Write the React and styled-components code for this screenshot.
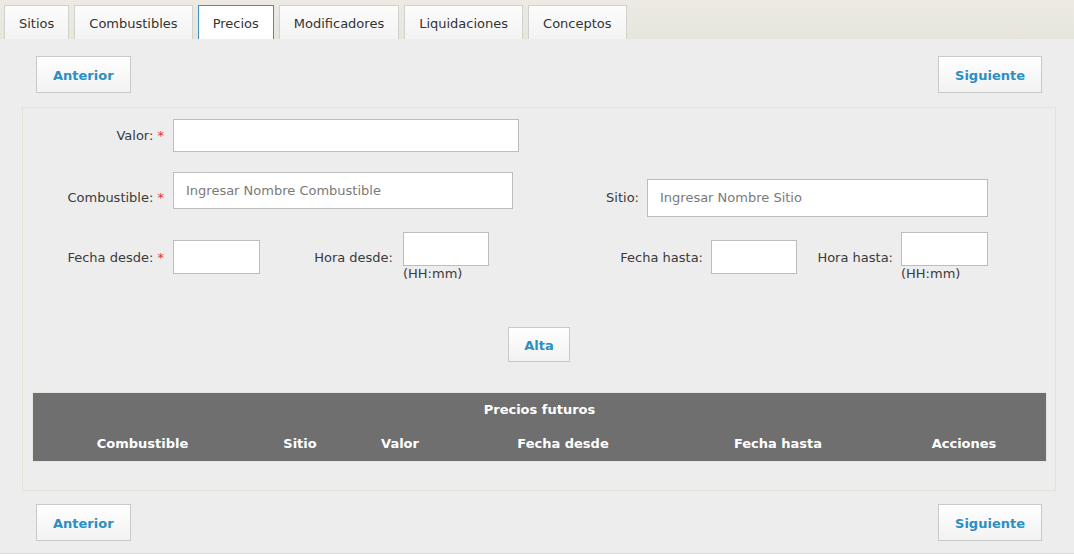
import React from "react";
import styled, { createGlobalStyle, css } from "styled-components";

const GlobalStyle = createGlobalStyle`
  html, body { margin: 0; padding: 0; background: #ffffff; }
  body { font-family: "DejaVu Sans", Verdana, sans-serif; }
  * { box-sizing: border-box; }
`;

const Page = styled.div`
  width: 1074px;
  height: 554px;
  background: #ededed;
  border-bottom: 1px solid #dcdcdc;
  font-family: "DejaVu Sans", Verdana, sans-serif;
`;

const TabBar = styled.div`
  height: 39px;
  display: flex;
  align-items: flex-end;
  gap: 5px;
  padding: 0 4px;
  background: linear-gradient(#eceae3, #e7e6dd);
`;

const Tab = styled.div`
  height: 34px;
  line-height: 34px;
  padding: 1px 14px 0;
  font-size: 13px;
  color: #333;
  border: 1px solid #d2d2cc;
  border-bottom: none;
  background: linear-gradient(#fcfcfc, #f3f3f3);
  ${(p) =>
    p.$active &&
    css`
      background: #ffffff;
      border-color: #3d8fbd;
    `}
`;

const NavRow = styled.div`
  display: flex;
  justify-content: space-between;
  padding: 0 32px 0 36px;
  margin-top: ${(p) => p.$top}px;
`;

const Button = styled.button`
  height: ${(p) => p.$h || 37}px;
  padding: 1px ${(p) => p.$px || 16}px 0;
  border: 1px solid #c9c9c9;
  background: linear-gradient(#ffffff, #f2f2f2);
  color: #2b8fc3;
  font-family: "DejaVu Sans", Verdana, sans-serif;
  font-weight: bold;
  font-size: 13px;
  cursor: pointer;
`;

const Panel = styled.div`
  margin: 14px 18px 0 22px;
  border: 1px solid #e2e2d8;
  padding: 11px 0 28px;
`;

const Row = styled.div`
  display: flex;
  align-items: center;
  margin-top: ${(p) => p.$top || 0}px;
`;

const Label = styled.label`
  width: ${(p) => p.$w}px;
  margin-right: ${(p) => p.$gap}px;
  text-align: right;
  font-size: 13px;
  color: #3a3a3a;
  white-space: nowrap;
`;

const Star = styled.span`
  color: #e2352f;
`;

const Input = styled.input`
  width: ${(p) => p.$w}px;
  height: ${(p) => p.$h}px;
  margin-bottom: ${(p) => p.$mb || 0}px;
  border: 1px solid #bdbdbd;
  background: #fff;
  padding: 0 12px;
  font-family: "DejaVu Sans", Verdana, sans-serif;
  font-size: 13px;
  color: #333;
  outline: none;
  &::placeholder { color: #7a7a7a; }
`;

const TimeGroup = styled.div`
  display: flex;
  flex-direction: column;
`;

const Hint = styled.span`
  font-size: 13px;
  line-height: 16px;
  color: #3a3a3a;
`;

const Center = styled.div`
  display: flex;
  justify-content: center;
  margin-top: 45px;
`;

const Table = styled.div`
  margin: 30px 8px 0 9px;
  border: 1px solid #e6e6de;
  background: #6f6f6f;
  color: #ffffff;
  font-weight: bold;
  font-size: 13px;
`;

const TitleRow = styled.div`
  height: 33px;
  line-height: 33px;
  text-align: center;
`;

const HeadRow = styled.div`
  display: grid;
  grid-template-columns: 219fr 96fr 104fr 222fr 208fr 164fr;
  height: 35px;
  align-items: center;
  text-align: center;
`;

const Req = ({ children }) => (
  <>
    {children} <Star>*</Star>
  </>
);

export default function App() {
  return (
    <>
      <GlobalStyle />
      <Page>
        <TabBar>
          <Tab>Sitios</Tab>
          <Tab>Combustibles</Tab>
          <Tab $active>Precios</Tab>
          <Tab>Modificadores</Tab>
          <Tab>Liquidaciones</Tab>
          <Tab>Conceptos</Tab>
        </TabBar>

        <NavRow $top={17}>
          <Button>Anterior</Button>
          <Button>Siguiente</Button>
        </NavRow>

        <Panel>
          <Row>
            <Label $w={141} $gap={9}>
              <Req>Valor:</Req>
            </Label>
            <Input $w={346} $h={33} />
          </Row>

          <Row $top={20}>
            <Label $w={141} $gap={9}>
              <Req>Combustible:</Req>
            </Label>
            <Input $w={340} $h={37} $mb={14} placeholder="Ingresar Nombre Combustible" />
            <Label $w={126} $gap={8}>Sitio:</Label>
            <Input $w={341} $h={38} placeholder="Ingresar Nombre Sitio" />
          </Row>

          <Row $top={9}>
            <Label $w={141} $gap={9}>
              <Req>Fecha desde:</Req>
            </Label>
            <Input $w={87} $h={34} />
            <Label $w={133} $gap={10}>Hora desde:</Label>
            <TimeGroup>
              <Input $w={86} $h={34} />
              <Hint>(HH:mm)</Hint>
            </TimeGroup>
            <Label $w={214} $gap={8}>Fecha hasta:</Label>
            <Input $w={86} $h={34} />
            <Label $w={96} $gap={8}>Hora hasta:</Label>
            <TimeGroup>
              <Input $w={87} $h={34} />
              <Hint>(HH:mm)</Hint>
            </TimeGroup>
          </Row>

          <Center>
            <Button $h={35} $px={15}>Alta</Button>
          </Center>

          <Table>
            <TitleRow>Precios futuros</TitleRow>
            <HeadRow>
              <span>Combustible</span>
              <span>Sitio</span>
              <span>Valor</span>
              <span>Fecha desde</span>
              <span>Fecha hasta</span>
              <span>Acciones</span>
            </HeadRow>
          </Table>
        </Panel>

        <NavRow $top={13}>
          <Button>Anterior</Button>
          <Button>Siguiente</Button>
        </NavRow>
      </Page>
    </>
  );
}
